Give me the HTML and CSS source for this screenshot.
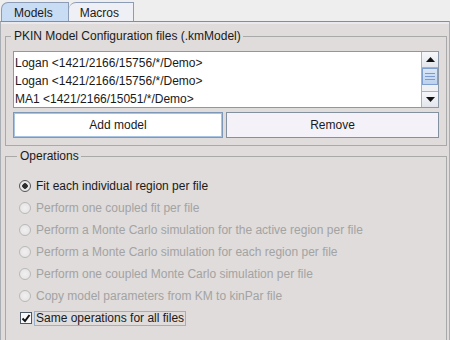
FILE: index.html
```html
<!DOCTYPE html>
<html lang="en">
<head>
<meta charset="UTF-8">
<title>PKIN Models</title>
<link rel="stylesheet" href="styles.css">
</head>
<body>
    <div class="tabs">
        <div class="tab active">Models</div>
        <div class="tab">Macros</div>
    </div>

    <div class="panel">
        <!-- model files -->
        <fieldset class="group files">
            <legend>PKIN Model Configuration files (.kmModel)</legend>
            <div class="list">
                <ul class="items">
                    <li>Logan &lt;1421/2166/15756/*/Demo&gt;</li>
                    <li>Logan &lt;1421/2166/15756/*/Demo&gt;</li>
                    <li>MA1 &lt;1421/2166/15051/*/Demo&gt;</li>
                </ul>
                <div class="scrollbar">
                    <div class="sb-btn">
                        <svg width="9" height="5" viewBox="0 0 9 5"><path d="M0 5 L4.5 0 L9 5 Z" fill="#111"/></svg>
                    </div>
                    <div class="sb-thumb"><span></span><span></span><span></span></div>
                    <div class="sb-track"></div>
                    <div class="sb-btn">
                        <svg width="9" height="5" viewBox="0 0 9 5"><path d="M0 0 L9 0 L4.5 5 Z" fill="#111"/></svg>
                    </div>
                </div>
            </div>
            <div class="buttons">
                <button class="btn focused">Add model</button>
                <button class="btn">Remove</button>
            </div>
        </fieldset>

        <!-- operations -->
        <fieldset class="group ops">
            <legend>Operations</legend>
            <div class="option"><span class="radio checked"></span>Fit each individual region per file</div>
            <div class="option disabled"><span class="radio"></span>Perform one coupled fit per file</div>
            <div class="option disabled"><span class="radio"></span>Perform a Monte Carlo simulation for the active region per file</div>
            <div class="option disabled"><span class="radio"></span>Perform a Monte Carlo simulation for each region per file</div>
            <div class="option disabled"><span class="radio"></span>Perform one coupled Monte Carlo simulation per file</div>
            <div class="option disabled"><span class="radio"></span>Copy model parameters from KM to kinPar file</div>
            <div class="option">
                <span class="check">
                    <svg width="10" height="10" viewBox="0 0 10 10"><path d="M1.5 5.5 L4 8 L8.5 2" fill="none" stroke="#111" stroke-width="2"/></svg>
                </span>
                <span class="focus-label">Same operations for all files</span>
            </div>
        </fieldset>
    </div>
</body>
</html>
```

FILE: styles.css
```css
body {
    margin: 0;
    background: #eeeeee;
    font-family: "Liberation Sans", Arial, sans-serif;
    font-size: 12px;
    color: #1a1a1a;
    height: 340px;
    overflow: hidden;
}
.tabs {
    display: flex;
    height: 21px;
    padding: 2px 0 0 1px;
    box-sizing: border-box;
}
.tab {
    height: 19px;
    box-sizing: border-box;
    padding: 2px 14px 0 12px;
    border: 1px solid #8d9cb6;
    border-bottom: none;
    border-top-left-radius: 7px;
    background: #eff0f5;
    line-height: 16px;
}
.tab + .tab {
    border-left: none;
    padding-left: 11px;
}
.tab.active {
    background: #c8dcf3;
    padding-right: 15px;
}
.panel {
    background: #dfdcdb;
    border-top: 1px solid #7590b5;
    border-left: 1px solid #a9adb4;
    border-right: 1px solid #a9adb4;
    box-shadow: inset 0 2px 0 #e9e9ee;
    height: 319px;
    overflow: hidden;
    padding: 7px 2px 0 4px;
    box-sizing: border-box;
}
.group {
    margin: 0;
    border: 1px solid #a9a9a9;
    min-width: 0;
}
.group legend {
    padding: 0 2px 0 3px;
    margin-left: -2px;
    line-height: 14px;
}
.files {
    padding: 8px 7px 7px 7px;
}
.list {
    display: flex;
    height: 57px;
    border: 1px solid #8b98a8;
    background: #fff;
    box-sizing: border-box;
}
.items {
    flex: 1;
    list-style: none;
    margin: 0;
    padding: 2px 0 0 1px;
}
.items li {
    height: 18px;
    line-height: 18px;
}
.scrollbar {
    width: 16px;
    display: flex;
    flex-direction: column;
    border-left: 1px solid #a8b2c0;
    background: #eef0f4;
}
.sb-btn {
    height: 15px;
    display: flex;
    align-items: center;
    justify-content: center;
    background: linear-gradient(#f6f7fa, #e2e6ec);
    border-bottom: 1px solid #a8b2c0;
}
.sb-btn:last-child {
    border-bottom: none;
    border-top: 1px solid #a8b2c0;
}
.sb-thumb {
    height: 15px;
    border: 1px solid #7f9fcc;
    background: linear-gradient(#dbe7f7, #bcd1ee);
    display: flex;
    flex-direction: column;
    justify-content: center;
    align-items: center;
    gap: 2px;
}
.sb-thumb span {
    width: 10px;
    height: 1px;
    background: #7d9bd0;
}
.sb-track {
    flex: 1;
}
.buttons {
    display: grid;
    grid-template-columns: 210px 1fr;
    gap: 3px;
    margin-top: 4px;
}
.btn {
    height: 26px;
    font: inherit;
    color: #1a1a1a;
    background: #f4f2f8;
    border: 1px solid #8390a0;
    padding: 0;
}
.btn.focused {
    background: #fff;
    border: 1px solid #7e98b8;
    box-shadow: inset 0 0 0 1px #a9c3e3;
}
.ops {
    margin-top: 3px;
    padding: 12px 7px 0 13px;
    height: 200px;
}
.option {
    display: flex;
    align-items: center;
    height: 22px;
    gap: 5px;
}
.option.disabled {
    color: #a3a3a3;
}
.radio {
    width: 12px;
    height: 12px;
    box-sizing: border-box;
    border-radius: 50%;
    border: 1px solid #b9b9b9;
    background: radial-gradient(#f1f0f0, #e3e1e0);
}
.radio.checked {
    border-color: #555;
    background: radial-gradient(#2e2e2e 0 2.5px, #e8e8e8 3px);
}
.check {
    width: 12px;
    height: 12px;
    margin-left: 1px;
    box-sizing: border-box;
    border: 1px solid #4d5866;
    background: #f8f8fa;
    display: flex;
    align-items: center;
    justify-content: center;
}
.focus-label {
    border: 1px solid #9ab0cc;
    padding: 0 1px;
    line-height: 13px;
    margin-left: -3px;
}
```
